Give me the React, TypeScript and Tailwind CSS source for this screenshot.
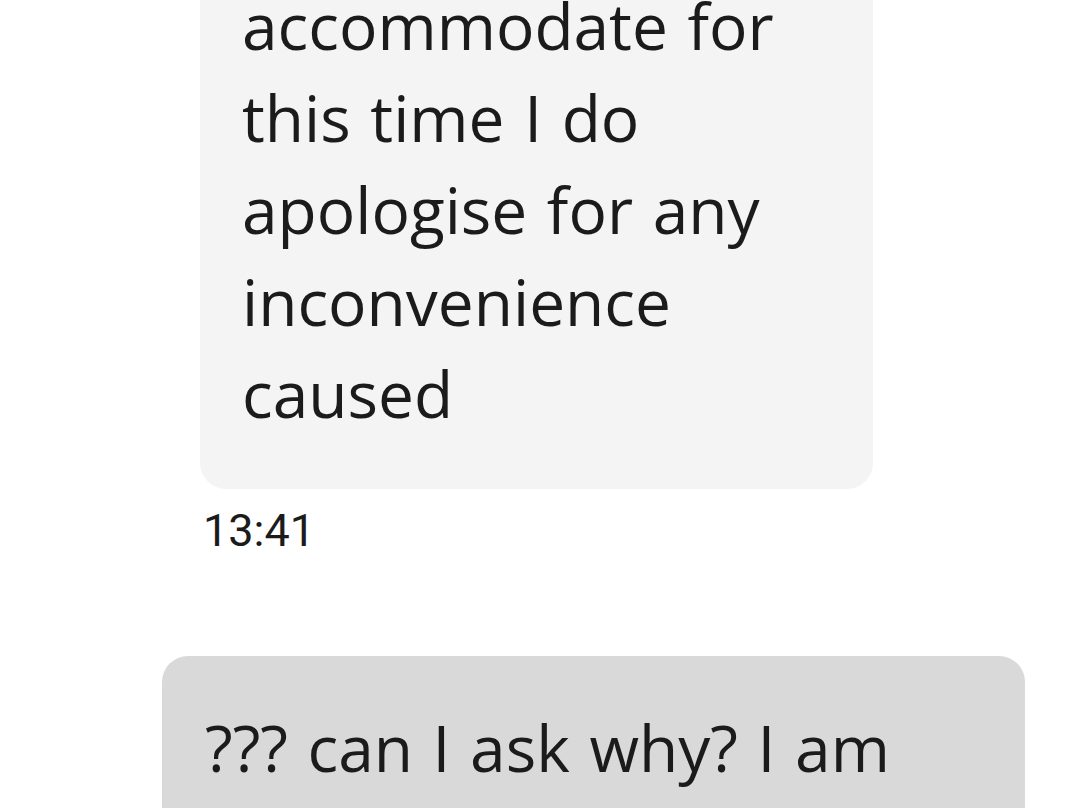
export default function App() {
  const font = { fontFamily: '"Open Sans", "Noto Sans", sans-serif' };
  return (
    <div className="w-[1080px] h-[808px] overflow-hidden bg-white text-[#1b1b1b]" style={font}>
      <div className="flex flex-col">
        <div className="ml-[200px] mt-[-60px] w-[673px] rounded-[26px] bg-[#f4f4f4] pl-[42px] pt-[40px] pb-[49px] text-[64px] leading-[92px] [word-spacing:3px]">
          <div>accommodate for</div>
          <div>this time I do</div>
          <div>apologise for any</div>
          <div>inconvenience</div>
          <div>caused</div>
        </div>
        <div className="ml-[203px] mt-[14px] text-[45px] leading-[56px]" style={{ fontFamily: 'Roboto, sans-serif' }}>13:41</div>
        <div className="ml-[162px] mt-[97px] w-[863px] rounded-[26px] bg-[#d9d9d9] pl-[43px] pt-[46px] pb-[40px] text-[64px] leading-[92px] [word-spacing:3px]">
          <div>??? can I ask why? I am</div>
          <div>&nbsp;</div>
        </div>
      </div>
    </div>
  );
}
